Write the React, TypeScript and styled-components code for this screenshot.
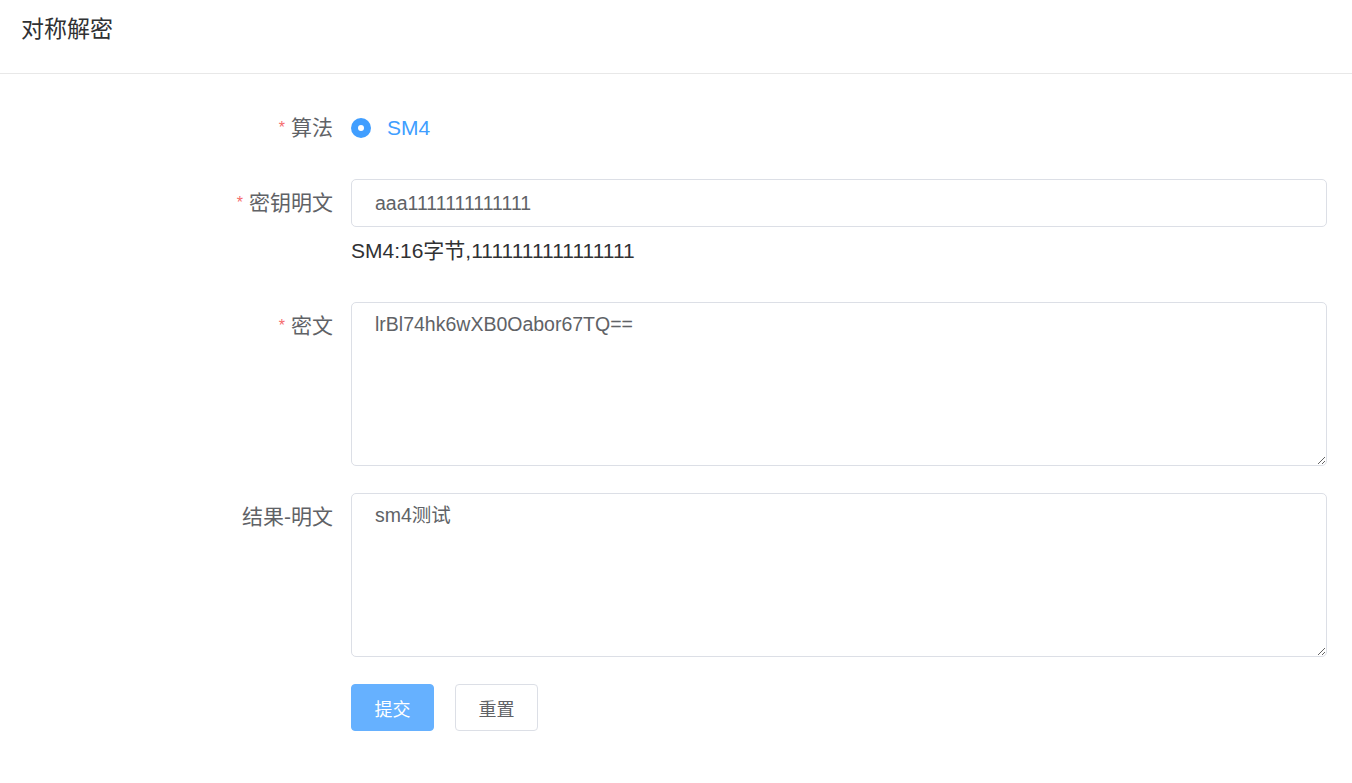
import React from "react";
import styled, { createGlobalStyle } from "styled-components";

const GlobalStyle = createGlobalStyle`
  html, body { margin: 0; padding: 0; background: #fff; }
  body { font-family: "Liberation Sans", "Noto Sans CJK SC", sans-serif; color: #303133; }
  * { box-sizing: border-box; }
`;

const Header = styled.header`
  height: 74px;
  padding: 14px 21px 0;
  border-bottom: 1px solid #e8e8e8;
  font-size: 23px;
  line-height: 30px;
  color: #303133;
`;

const Form = styled.form`
  margin-top: 31px;
  padding-right: 25px;
  display: flex;
  flex-direction: column;
  gap: 27px;
`;

const Item = styled.div`
  display: grid;
  grid-template-columns: 351px 1fr;
`;

const Label = styled.label<{ $compact?: boolean }>`
  text-align: right;
  padding-right: 18px;
  font-size: 21px;
  line-height: ${(p) => (p.$compact ? "45px" : "48px")};
  color: #606266;
  white-space: nowrap;
`;

const Star = styled.span`
  color: #f56c6c;
  font-size: 16px;
  margin-right: 6px;
  position: relative;
  top: -2px;
`;

const Content = styled.div`
  display: flex;
  flex-direction: column;
  min-width: 0;
`;

const RadioWrap = styled.label`
  display: flex;
  align-items: center;
  height: 45px;
  gap: 16px;
  cursor: pointer;
`;

const RadioDot = styled.span`
  width: 20px;
  height: 20px;
  border-radius: 50%;
  background: #409eff;
  display: flex;
  align-items: center;
  justify-content: center;
  &::after {
    content: "";
    width: 6px;
    height: 6px;
    border-radius: 50%;
    background: #fff;
  }
`;

const RadioText = styled.span`
  color: #409eff;
  font-size: 21px;
`;

const Input = styled.input`
  height: 48px;
  width: 100%;
  border: 1px solid #dcdfe6;
  border-radius: 5px;
  padding: 0 23px;
  font-family: inherit;
  font-size: 19.5px;
  color: #606266;
  outline: none;
`;

const Hint = styled.div`
  font-size: 21px;
  line-height: 48px;
  color: #303133;
`;

const TextArea = styled.textarea`
  width: 100%;
  height: 164px;
  border: 1px solid #dcdfe6;
  border-radius: 5px;
  padding: 8px 23px;
  font-family: inherit;
  font-size: 19.5px;
  line-height: 26px;
  color: #606266;
  resize: vertical;
  outline: none;
  display: block;
`;

const Buttons = styled.div`
  display: flex;
  gap: 21px;
`;

const Button = styled.button<{ $primary?: boolean }>`
  width: 83px;
  height: 47px;
  border-radius: 4px;
  font-family: inherit;
  font-size: 18px;
  border: 1px solid ${(p) => (p.$primary ? "#66b1ff" : "#dcdfe6")};
  background: ${(p) => (p.$primary ? "#66b1ff" : "#fff")};
  color: ${(p) => (p.$primary ? "#fff" : "#606266")};
  cursor: pointer;
`;

export default function App() {
  return (
    <>
      <GlobalStyle />
      <Header>对称解密</Header>
      <Form onSubmit={(e) => e.preventDefault()}>
        <Item>
          <Label $compact>
            <Star>*</Star>算法
          </Label>
          <Content>
            <RadioWrap>
              <RadioDot />
              <RadioText>SM4</RadioText>
            </RadioWrap>
          </Content>
        </Item>
        <Item>
          <Label>
            <Star>*</Star>密钥明文
          </Label>
          <Content>
            <Input defaultValue="aaa1111111111111" />
            <Hint>SM4:16字节,1111111111111111</Hint>
          </Content>
        </Item>
        <Item>
          <Label>
            <Star>*</Star>密文
          </Label>
          <Content>
            <TextArea defaultValue="lrBl74hk6wXB0Oabor67TQ==" />
          </Content>
        </Item>
        <Item>
          <Label>结果-明文</Label>
          <Content>
            <TextArea defaultValue="sm4测试" />
          </Content>
        </Item>
        <Item>
          <span />
          <Buttons>
            <Button $primary type="submit">提交</Button>
            <Button type="button">重置</Button>
          </Buttons>
        </Item>
      </Form>
    </>
  );
}
